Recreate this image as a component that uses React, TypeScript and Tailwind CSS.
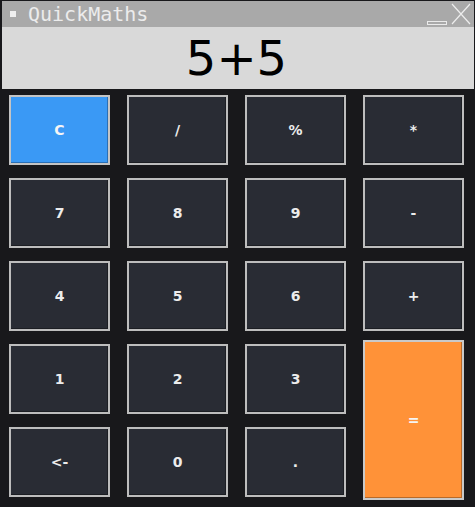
const keys = [
  { label: 'C', kind: 'blue' },
  { label: '/', kind: 'dark' },
  { label: '%', kind: 'dark' },
  { label: '*', kind: 'dark' },
  { label: '7', kind: 'dark' },
  { label: '8', kind: 'dark' },
  { label: '9', kind: 'dark' },
  { label: '-', kind: 'dark' },
  { label: '4', kind: 'dark' },
  { label: '5', kind: 'dark' },
  { label: '6', kind: 'dark' },
  { label: '+', kind: 'dark' },
  { label: '1', kind: 'dark' },
  { label: '2', kind: 'dark' },
  { label: '3', kind: 'dark' },
  { label: '=', kind: 'orange' },
  { label: '<-', kind: 'dark' },
  { label: '0', kind: 'dark' },
  { label: '.', kind: 'dark' },
];

export default function App() {
  return (
    <div
      className="w-[475px] h-[507px] bg-[#18181b] p-px pl-[2px] flex flex-col overflow-hidden"
      style={{ fontFamily: '"DejaVu Sans", sans-serif' }}
    >
      {/* Title bar */}
      <div className="h-[26px] bg-[#a9a9a9] flex items-center relative">
        <div className="w-[6px] h-[6px] bg-[#efefef] ml-[8px]" />
        <span
          className="ml-[12px] text-[20px] leading-none text-[#ececec]"
          style={{ fontFamily: '"DejaVu Sans Mono", monospace' }}
        >
          QuickMaths
        </span>
        <div className="ml-auto flex items-end h-full mr-[3px]">
          <div className="w-[20px] h-[4px] border border-[#eaeaea] mb-[2px] mr-[4px]" />
          <svg width="20" height="22" viewBox="0 0 20 22" className="mb-[2px]">
            <path d="M1 1 L19 21 M19 1 L1 21" stroke="#ededed" strokeWidth="1.2" fill="none" />
          </svg>
        </div>
      </div>

      {/* Display */}
      <div className="h-[62px] bg-[#d9d9d9] flex items-center justify-center">
        <span className="text-[48px] leading-none text-black -ml-[3px]">5+5</span>
      </div>

      {/* Keypad */}
      <div className="grid grid-cols-[repeat(4,101px)] grid-rows-[repeat(5,70px)] gap-x-[17px] gap-y-[13px] pl-[7px] pt-[6px]">
        {keys.map((k) => (
          <button
            key={k.label}
            className={
              k.kind === 'blue'
                ? 'border-2 border-[#c4c4c4] bg-[#3a99f5] shadow-[inset_-1px_-1px_0_#2a6fb5] text-[#f5f5f5] text-[14px] font-bold flex items-center justify-center'
                : k.kind === 'orange'
                  ? 'row-span-2 -mt-[4px] -mb-[3px] border-2 border-[#c9c9c9] bg-[#ff9238] shadow-[inset_-1px_-1px_0_#b86a2a] text-[#f5f5f5] text-[14px] font-bold flex items-center justify-center'
                  : 'border-2 border-[#bdbdbd] bg-[#292c34] shadow-[inset_-1px_-1px_0_#1c1e23] text-[#ececec] text-[14px] font-bold flex items-center justify-center'
            }
          >
            {k.label}
          </button>
        ))}
      </div>
    </div>
  );
}
